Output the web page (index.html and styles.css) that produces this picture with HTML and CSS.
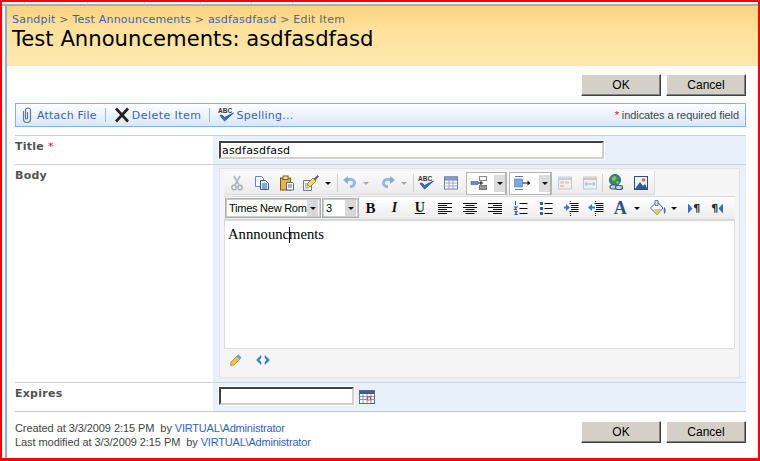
FILE: index.html
```html
<!DOCTYPE html>
<html lang="en">
<head>
<meta charset="utf-8">
<title>Edit Item</title>
<link rel="stylesheet" href="styles.css">
</head>
<body>
<div class="frame">
  <div class="tabs">
    <span class="tab t1"></span><span class="tab t2"></span><span class="tab t3"></span><span class="tab t4"></span><span class="tab t5"></span><span class="tab t6"></span>
  </div>
  <div class="shell">
    <div class="side"></div>
    <div class="page">
      <header class="head">
        <div class="crumbs"><a>Sandpit</a> &gt; <a>Test Announcements</a> &gt; <a>asdfasdfasd</a> &gt; Edit Item</div>
        <h1 class="title">Test Announcements: asdfasdfasd</h1>
      </header>
      <div class="body">
        <div class="actions">
          <button class="btn">OK</button>
          <button class="btn">Cancel</button>
        </div>
        <div class="toolbar">
          <svg class="ti clip"><use href="#i-clip"/></svg><a class="tlink l-attach">Attach File</a><span class="tsep"></span>
          <svg class="ti"><use href="#i-x"/></svg><a class="tlink l-delete">Delete Item</a><span class="tsep"></span>
          <svg class="ti" viewBox="0 0 16 16"><text x="0" y="5.500" class="abc">ABC</text><use href="#i-check"/></svg><a class="tlink l-spell">Spelling...</a>
          <span class="req"><b class="star">*</b> indicates a required field</span>
        </div>
        <div class="form">
          <div class="row r-title">
            <div class="label">Title <b class="star">*</b></div>
            <div class="cell"><input class="field f-title" value="asdfasdfasd"></div>
          </div>
          <div class="row r-body">
            <div class="label">Body</div>
            <div class="cell">
              <div class="panel">
                <div class="bar bar1">
                  <span class="b w25"><svg class="ic"><use href="#i-cut"/></svg></span>
                  <span class="b w25"><svg class="ic"><use href="#i-copy"/></svg></span>
                  <span class="b w25"><svg class="ic"><use href="#i-paste"/></svg></span>
                  <span class="b w23"><svg class="ic big"><use href="#i-brush"/></svg></span>
                  <span class="b w12"><i class="dd"></i></span>
                  <span class="b w6"><i class="vsep"></i></span>
                  <span class="b w20"><svg class="ic"><use href="#i-undo"/></svg></span>
                  <span class="b w12"><i class="dd off"></i></span>
                  <span class="b w6"></span>
                  <span class="b w20"><svg class="ic flip"><use href="#i-undo"/></svg></span>
                  <span class="b w12"><i class="dd off"></i></span>
                  <span class="b w6"><i class="vsep"></i></span>
                  <span class="b w20"><svg class="ic" viewBox="0 0 16 16"><text x="0" y="5.500" class="abc">ABC</text><use href="#i-check"/></svg></span>
                  <span class="b w30"><svg class="ic"><use href="#i-table"/></svg></span>
                  <span class="drop d1"><svg class="ic big"><use href="#i-style1"/></svg><span class="dbtn"><i class="dd"></i></span></span>
                  <span class="drop d2"><svg class="ic big"><use href="#i-style2"/></svg><span class="dbtn"><i class="dd"></i></span></span>
                  <span class="b w25"><svg class="ic"><use href="#i-grid1"/></svg></span>
                  <span class="b w25"><svg class="ic"><use href="#i-grid2"/></svg></span>
                  <i class="vsep"></i>
                  <span class="b w25"><svg class="ic big"><use href="#i-link"/></svg></span>
                  <span class="b w26"><svg class="ic"><use href="#i-image"/></svg></span>
                </div>
                <div class="bar bar2">
                  <span class="sel s-font"><span class="sval">Times New Roma</span><span class="sbtn"><i class="dd"></i></span></span>
                  <span class="sel s-size"><span class="sval">3</span><span class="sbtn"><i class="dd"></i></span></span>
                  <span class="b w23 tx tb">B</span>
                  <span class="b w252 tx ti2">I</span>
                  <span class="b w252 tx tu">U</span>
                  <span class="b w252"><svg class="ic"><use href="#i-left"/></svg></span>
                  <span class="b w252"><svg class="ic"><use href="#i-center"/></svg></span>
                  <span class="b w252"><svg class="ic"><use href="#i-right"/></svg></span>
                  <span class="b w252"><svg class="ic"><use href="#i-ol"/></svg></span>
                  <span class="b w252"><svg class="ic"><use href="#i-ul"/></svg></span>
                  <span class="b w252"><svg class="ic"><use href="#i-outdent"/></svg></span>
                  <span class="b w252"><svg class="ic"><use href="#i-indent"/></svg></span>
                  <span class="b w23 tx ta">A</span>
                  <span class="b w11"><i class="dd"></i></span>
                  <span class="b w22 gapl"><svg class="ic big"><use href="#i-fill"/></svg></span>
                  <span class="b w11"><i class="dd"></i></span>
                  <span class="b w24 gapl2 para"><svg class="pa"><use href="#i-arrow-r"/></svg><span class="pil">¶</span></span>
                  <span class="b w24 para"><span class="pil">¶</span><svg class="pa"><use href="#i-arrow-l"/></svg></span>
                </div>
                <div class="edit">Annnounc<span class="caret"></span>ments</div>
                <div class="foot">
                  <svg class="fi"><use href="#i-pencil"/></svg>
                  <svg class="fc"><use href="#i-code"/></svg>
                </div>
              </div>
            </div>
          </div>
          <div class="row r-exp">
            <div class="label">Expires</div>
            <div class="cell datecell"><input class="field f-date"><svg class="cal"><use href="#i-cal"/></svg></div>
          </div>
        </div>
        <div class="bottom">
          <div class="meta">
            <div>Created at 3/3/2009 2:15 PM&nbsp; by <a>VIRTUAL\Administrator</a></div>
            <div>Last modified at 3/3/2009 2:15 PM&nbsp; by <a>VIRTUAL\Administrator</a></div>
          </div>
          <div class="actions a2">
            <button class="btn">OK</button>
            <button class="btn">Cancel</button>
          </div>
        </div>
      </div>
    </div>
  </div>
</div>
<svg class="defs" width="0" height="0" aria-hidden="true">
  <symbol id="i-clip" viewBox="0 0 16 16"><path d="M4.500 4v8a3.500 3.500 0 0 0 7 0V3.500a2.500 2.500 0 0 0-5 0V11a1 1 0 0 0 2 0V5" fill="none" stroke="#66778c" stroke-width="1.200"/></symbol>
  <symbol id="i-x" viewBox="0 0 16 16"><path d="M2 1.500l12 13M14 1.500l-12 13" stroke="#222" stroke-width="2.600" fill="none"/></symbol>
  <symbol id="i-check" viewBox="0 0 16 16"><path d="M2 8.500l4.500 5.500L15.500 6 6.500 10.500 4 8z" fill="#2f72c8" stroke="#1c4f9c" stroke-width=".8"/></symbol>
  <symbol id="i-cut" viewBox="0 0 16 16"><path d="M5 1l5 9M11 1L6 10" stroke="#b3b9c2" stroke-width="1.700" fill="none"/><circle cx="5" cy="12.500" r="2.200" fill="none" stroke="#a9afb8" stroke-width="1.400"/><circle cx="11" cy="12.500" r="2.200" fill="none" stroke="#a9afb8" stroke-width="1.400"/></symbol>
  <symbol id="i-copy" viewBox="0 0 16 16"><path d="M1.500 1.500h6l2 2v8h-8z" fill="#fff" stroke="#5f86b8"/><path d="M6.500 5.500h5l3 3v6h-8z" fill="#e8f0fb" stroke="#2d5f9e"/><path d="M8 9h5M8 11h5M8 13h5" stroke="#2d5f9e"/></symbol>
  <symbol id="i-paste" viewBox="0 0 16 16"><rect x="1.500" y="3" width="10" height="12" fill="#e2b650" stroke="#7a5a1e"/><rect x="4" y="1" width="5" height="3.500" fill="#f3e2a8" stroke="#7a5a1e"/><path d="M7.500 7.500h6l1 1v6.500h-7z" fill="#fff" stroke="#55677f"/><path d="M9 10h4M9 12h4" stroke="#55677f"/></symbol>
  <symbol id="i-brush" viewBox="0 0 18 18"><path d="M1.500 6.500h8v10h-8z" fill="#f4f4ee" stroke="#6b7a8d"/><path d="M3 10h3M3 12h4M3 14h4" stroke="#8a97a8"/><path d="M5 10l6-6 3 3-6 6z" fill="#f3d964" stroke="#a58a24"/><path d="M12 5l3.500-3.500 1 1L13.500 6z" fill="#5b6f95" stroke="#3c4f74" stroke-width=".7"/></symbol>
  <symbol id="i-undo" viewBox="0 0 16 16"><path d="M5 4.500h3.500a3.500 3.500 0 0 1 1 7H8" fill="none" stroke="#94b9e8" stroke-width="3"/><path d="M1 5l5-4v8z" fill="#84ade2"/></symbol>
  <symbol id="i-table" viewBox="0 0 16 16"><rect x="1.500" y="2" width="13" height="12" fill="#fff" stroke="#6c7faa"/><rect x="1.500" y="2" width="13" height="3" fill="#8ea3cd" stroke="#6c7faa"/><path d="M1.500 8h13M1.500 11h13M6 5v9M10 5v9" stroke="#97a8cb"/></symbol>
  <symbol id="i-style1" viewBox="0 0 18 16"><rect x="9.500" y="1.500" width="7" height="4" fill="#f4f4f4" stroke="#888"/><rect x="9.500" y="10.500" width="7" height="4" fill="#999" stroke="#777"/><rect x="1" y="6.500" width="7" height="3" fill="#5b8fd6" stroke="#3268b0" stroke-width=".6"/><path d="M8 8h5M11 6v4" stroke="#111"/></symbol>
  <symbol id="i-style2" viewBox="0 0 18 16"><path d="M2 1.500h8M2 14.500h8" stroke="#5778a8"/><rect x="1.500" y="4" width="8" height="8" fill="#7da8e0" stroke="#4b78b8" stroke-width=".6"/><path d="M9.500 8h6" stroke="#111"/><path d="M17.500 8l-3-2.500v5z" fill="#111"/></symbol>
  <symbol id="i-grid1" viewBox="0 0 16 16"><rect x="1.500" y="2" width="13" height="12" fill="#eef0f2" stroke="#c3c8d0"/><path d="M2 3h12v2H2z" fill="#c9ccd2"/><path d="M3 6.500h4v2H3zM8 6.500h4v2H8zM3 10h4v2H3z" fill="#eec4a8"/></symbol>
  <symbol id="i-grid2" viewBox="0 0 16 16"><rect x="1.500" y="2" width="13" height="12" fill="#eef0f2" stroke="#c3c8d0"/><path d="M2 3h12v2H2z" fill="#d8c4b4"/><path d="M3 9h10M5 7L3 9l2 2M11 7l2 2-2 2" stroke="#9fb4cc" fill="none"/></symbol>
  <symbol id="i-link" viewBox="0 0 18 18"><circle cx="8" cy="6" r="5.500" fill="#3d8a5a" stroke="#2e5f8e"/><path d="M5 3l3-1 2 2-3 3-2-1zM9 8l2-1 1 2-2 1z" fill="#7cc46a"/><rect x="3" y="11" width="7" height="4" rx="2" fill="#c8d2de" stroke="#39567e" stroke-width="1.200"/><rect x="8.500" y="11.500" width="7" height="4" rx="2" fill="#c8d2de" stroke="#39567e" stroke-width="1.200"/></symbol>
  <symbol id="i-image" viewBox="0 0 16 16"><rect x="1.500" y="1.500" width="13" height="13" fill="#eaf2fb" stroke="#2c4f86"/><circle cx="10.500" cy="5" r="1.800" fill="#e8663c"/><path d="M2 14l5-7 3 4 2-2 2.500 5z" fill="#34589a"/></symbol>
  <symbol id="i-left" viewBox="0 0 16 16"><path d="M1 3.500h14M1 5.500h9M1 7.500h14M1 9.500h9M1 11.500h14M1 13.500h9" stroke="#111"/></symbol>
  <symbol id="i-center" viewBox="0 0 16 16"><path d="M1 3.500h14M3.500 5.500h9M1 7.500h14M3.500 9.500h9M1 11.500h14M3.500 13.500h9" stroke="#111"/></symbol>
  <symbol id="i-right" viewBox="0 0 16 16"><path d="M1 3.500h14M6 5.500h9M1 7.500h14M6 9.500h9M1 11.500h14M6 13.500h9" stroke="#111"/></symbol>
  <symbol id="i-ol" viewBox="0 0 16 16"><path d="M2.500 1v4M1 7h3L1.500 9.500H4M1.500 11.500H4L2.500 13l1.500 1.500H1.500" stroke="#2b62b4" fill="none" stroke-width="1.100"/><path d="M6.500 3.500h8M6.500 8.500h8M6.500 13.500h8" stroke="#111"/></symbol>
  <symbol id="i-ul" viewBox="0 0 16 16"><path d="M2 2h3v3H2zM2 7h3v3H2zM2 12h3v3H2z" fill="#2b62b4"/><path d="M6.500 3.500h8M6.500 8.500h8M6.500 13.500h8" stroke="#111"/></symbol>
  <symbol id="i-outdent" viewBox="0 0 16 16"><path d="M7 1.500h1M6.500 3.500h9M8 5.500h7.500M8 7.500h7.500M8 9.500h7.500M6.500 11.500h9M7 13.500h1M7 15.500h1" stroke="#111"/><path d="M1 7.500h3" stroke="#3b78c8" stroke-width="2"/><path d="M7 7.500L3 4v7z" fill="#3b78c8"/></symbol>
  <symbol id="i-indent" viewBox="0 0 16 16"><path d="M7 1.500h1M6.500 3.500h9M8 5.500h7.500M8 7.500h7.500M8 9.500h7.500M6.500 11.500h9M7 13.500h1M7 15.500h1" stroke="#111"/><path d="M3 7.500h4" stroke="#3b78c8" stroke-width="2"/><path d="M0 7.500L4 4v7z" fill="#3b78c8"/></symbol>
  <symbol id="i-fill" viewBox="0 0 18 18"><path d="M1.500 9L8 2.500 14 9l-6 6.500z" fill="#fff" stroke="#4e5f7a"/><path d="M6 1.500h3v5H6z" fill="#d8dfe9" stroke="#4e5f7a" stroke-width=".8"/><path d="M5 10h8l-5 5z" fill="#f0c85a"/><path d="M15 8c2 1 2 5 .5 7-1-2-1-4-.5-7z" fill="#3a6ec0"/></symbol>
  <symbol id="i-arrow-r" viewBox="0 0 6 11"><path d="M1 .5l4.500 5-4.500 5z" fill="#2b72c8"/></symbol>
  <symbol id="i-arrow-l" viewBox="0 0 6 11"><path d="M5 .5L.5 5.500l4.500 5z" fill="#2b72c8"/></symbol>
  <symbol id="i-pencil" viewBox="0 0 14 14"><path d="M2 9l7-7 3 3-7 7-3.500.5z" fill="#f5c04a" stroke="#9a7420" stroke-width=".6"/><path d="M7.500 3.500L9.500 1.500l3 3-2 2z" fill="#5aa5dc"/></symbol>
  <symbol id="i-code" viewBox="0 0 16 12"><path d="M6 1.500L1.500 6 6 10.500V8L4 6l2-2zM10 1.500L14.500 6 10 10.500V8l2-2-2-2z" fill="#2b86c8" stroke="#1d6aa8" stroke-width=".5"/></symbol>
  <symbol id="i-cal" viewBox="0 0 16 16"><rect x=".5" y="2.500" width="15" height="13" fill="#fff" stroke="#4e6c96"/><path d="M1 3h14v3H1z" fill="#3e5f93"/><path d="M.5 8.500h15M.5 11.500h15M4 6v9M8 6v9M12 6v9" stroke="#7f98bd"/><rect x="8.500" y="9" width="3" height="3" fill="#fff" stroke="#e0452a"/></symbol>
</svg>
</body>
</html>
```
FILE: styles.css
```css
* { box-sizing: border-box; }
html, body { margin: 0; padding: 0; background: #fff; }
.defs { position: absolute; left: 0; top: 0; }
.abc { font: bold 6.500px "Liberation Sans", sans-serif; fill: #333; }
.frame {
  width: 760px; height: 461px; overflow: hidden;
  border: solid #f00; border-width: 2px 2px 3px 2px;
  display: flex; flex-direction: column;
  font-family: "DejaVu Sans", sans-serif; font-size: 11px;
}
.tabs { height: 4px; flex: none; display: flex; background: #fff; border-bottom: 2px solid #a3afbd; }
.tab { height: 2px; border-right: 1px solid #d6dde6; }
.t1 { width: 23px; } .t2 { width: 63px; } .t3 { width: 57px; } .t4 { width: 56px; } .t5 { width: 51px; } .t6 { width: 41px; }
.shell { flex: 1; display: flex; min-height: 0; }
.side { width: 5px; flex: none; background: #fff; border-right: 2px solid #86aee8; }
.page { flex: 1; min-width: 0; }
.head {
  height: 60px; padding: 7px 0 0 5px;
  background: linear-gradient(#fdd27f, #fde29c 40%, #fee8ac);
}
.crumbs { color: #666; line-height: 13px; letter-spacing: .22px; }
.crumbs a { color: #3d62b5; }
.title { margin: 1px 0 0; font-weight: 400; font-size: 21.170px; line-height: 24px; color: #000; }
.body { padding: 8px 12px 0 8px; }
.actions { display: flex; justify-content: flex-end; gap: 5px; }
.btn {
  width: 80px; height: 22px; padding: 0 0 1px; margin: 0;
  background: #d4d0c8; color: #000;
  border: 1px solid; border-color: #fff #404040 #404040 #fff;
  box-shadow: inset -1px -1px 0 #808080;
  font: 12px "Liberation Sans", sans-serif;
}
.toolbar {
  height: 24px; margin-top: 7px; padding: 0 6px 0 3px;
  display: flex; align-items: center;
  border: 1px solid #83b0ec;
  background: linear-gradient(#fff, #d6e8fe);
}
.ti { width: 16px; height: 16px; flex: none; }
.tlink { color: #3d62b5; margin-left: 2px; }
.l-attach { letter-spacing: .2px; }
.l-delete { letter-spacing: .45px; }
.l-spell { letter-spacing: .25px; }
.tsep { width: 1px; height: 14px; background: #9db8dc; margin: 0 8px 0 8px; }
.req { margin-left: auto; color: #444; font: 11px "Liberation Sans", sans-serif; letter-spacing: -.08px; }
.star { color: #f00; font-weight: 400; }
.form { margin-top: 8px; border-bottom: 1px solid #c8c8c8; }
.row { display: grid; grid-template-columns: 198px 1fr; border-top: 1px solid #cfcfcf; }
.label { font-weight: 700; color: #525252; padding-top: 4px; line-height: 14px; letter-spacing: .25px; }
.cell { background: #e8f0fc; padding: 0 6px; }
.r-title { height: 29px; }
.r-title .cell { padding-top: 5px; }
.r-body { height: 218px; }
.r-body .cell { padding-top: 3px; }
.r-exp { height: 29px; }
.datecell { padding-top: 4px; display: flex; align-items: flex-start; gap: 5px; }
.field {
  display: block; height: 18px; margin: 0; padding: 0 1px;
  border: 2px solid; border-color: #404040 #d4d0c8 #d4d0c8 #404040;
  outline: 1px solid #fff;
  background: #fff; font: 11px "DejaVu Sans", sans-serif; color: #000; letter-spacing: .2px;
}
.f-title { width: 385px; }
.f-date { width: 135px; }
.cal { width: 16px; height: 16px; margin-top: 1px; flex: none; }
.panel { height: 210px; border: 1px solid #e2e2e2; background: #f5f5f5; padding: 2px 4px 0 4px; }
.bar { display: flex; align-items: center; }
.bar1 {
  width: 431px; height: 24px; padding-top: 1px;
  background: linear-gradient(#fbfbfb, #ebebeb);
  border: solid #dcdcdc; border-width: 0 1px 1px 0;
}
.bar2 {
  width: 511px; height: 25px; margin-top: 1px; padding-left: 1px;
  background: linear-gradient(#fff, #ececec);
  border: solid #d8d8d8; border-width: 1px 0 2px 0;
}
.b { display: flex; flex: none; align-items: center; justify-content: center; height: 100%; }
.w6 { width: 6px; } .w11 { width: 11px; } .w12 { width: 12px; } .w20 { width: 20px; } .w22 { width: 22px; }
.w23 { width: 23px; } .w24 { width: 24px; } .w25 { width: 25px; } .w252 { width: 25.200px; } .w26 { width: 26px; } .w30 { width: 30px; }
.gapl { margin-left: 4px; }
.gapl2 { margin-left: 2px; }
.ic { width: 16px; height: 16px; flex: none; display: block; }
.big { width: 18px; height: 18px; }
.flip { transform: scaleX(-1); }
.dd { display: block; width: 0; height: 0; border: solid transparent; border-width: 3px 3px 0; border-top-color: #111; flex: none; }
.dd.off { border-top-color: #a8a8a8; }
.vsep { display: block; width: 1px; height: 18px; background: #cfcfcf; flex: none; }
.drop {
  display: flex; align-items: center; height: 23px; flex: none; background: #fff;
  border: 2px solid #b4b4b4; border-width: 1px 2px 1px 1px; padding-left: 3px; justify-content: space-between;
}
.d1 { width: 41px; margin-right: 2px; }
.d2 { width: 43px; }
.dbtn { display: flex; align-items: center; justify-content: center; width: 11px; background: #dcdcdc; margin: 2px 0; height: 17px; }
.sel {
  display: flex; align-items: center; justify-content: space-between; flex: none;
  height: 20px; background: #fff; border: 1px solid #b0b0b0; outline: 0;
  font: 11px "Liberation Sans", sans-serif; color: #000;
  box-shadow: inset 0 0 0 1px #ccc;
}
.s-font { width: 96px; margin-right: 1px; }
.s-size { width: 37px; }
.sval { padding-left: 3px; white-space: nowrap; overflow: hidden; flex: 1; min-width: 0; letter-spacing: -.25px; }
.sbtn { width: 11px; height: 16px; margin-right: 2px; background: #d9d9d9; display: flex; align-items: center; justify-content: center; flex: none; }
.tx { font-family: "Liberation Serif", serif; color: #111; }
.tb { font-weight: 700; font-size: 15px; }
.ti2 { font-style: italic; font-weight: 700; font-size: 14px; }
.tu { text-decoration: underline; font-weight: 700; font-size: 14px; }
.ta { font-weight: 700; font-size: 18px; color: #2f4f8f; }
.para { gap: 0; }
.pa { width: 6px; height: 11px; flex: none; }
.pil { font: 700 11px "DejaVu Sans", sans-serif; color: #222; }
.edit {
  width: 511px; height: 128px; padding: 4px 0 0 3px;
  background: #fff; border: 1px solid #ddd; border-top: 0;
  font: 14.670px/18px "Liberation Serif", serif; color: #000;
}
.caret { display: inline-block; width: 1px; height: 16px; margin-right: -1px; background: #000; vertical-align: -4px; }
.foot { display: flex; align-items: center; padding: 4px 0 0 5px; }
.fi { width: 14px; height: 14px; flex: none; }
.fc { width: 16px; height: 12px; margin-left: 12px; flex: none; }
.bottom { display: flex; justify-content: space-between; align-items: flex-start; padding-top: 8px; }
.meta { padding-top: 1px; color: #444; font: 11px/14px "Liberation Sans", sans-serif; letter-spacing: -.07px; }
.meta a { color: #2f62c4; letter-spacing: -.2px; }
.a2 { padding-top: 1px; }
```
